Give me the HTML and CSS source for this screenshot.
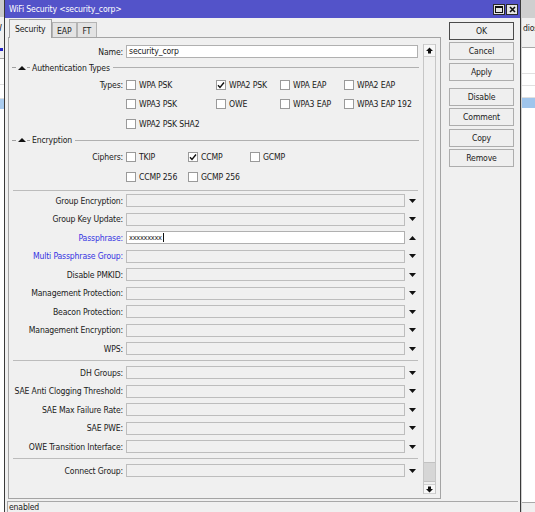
FILE: index.html
```html
<!DOCTYPE html>
<html>
<head>
<meta charset="UTF-8">
<title>WiFi Security</title>
<link rel="stylesheet" href="styles.css">
</head>
<body>
<div class="desk">
  <!-- windows behind the dialog -->
  <div class="bg-left">
    <div class="bl-title"></div>
    <div class="bl-tool"><span class="bl-w">W</span></div>
    <div class="bl-tool2"><span class="bl-plus"></span></div>
    <div class="bl-row r1"></div>
    <div class="bl-row r2"></div>
    <div class="bl-row sel"></div>
    <div class="bl-rest"></div>
  </div>
  <div class="bg-right">
    <div class="br-title"></div>
    <div class="br-head">dios</div>
    <div class="br-row r1"></div>
    <div class="br-row r2"></div>
    <div class="br-row r3"></div>
    <div class="br-row sel"></div>
    <div class="br-rest"></div>
    <div class="br-foot"></div>
  </div>

  <div class="dlg">
    <div class="title">
      <span class="title-text">WiFi Security &lt;security_corp&gt;</span>
      <div class="tbtns">
        <span class="tbtn"><svg width="8" height="7" viewBox="0 0 8 7"><rect x="0.5" y="0.5" width="7" height="6" fill="none" stroke="#111"/><rect x="0" y="0" width="8" height="2" fill="#111"/></svg></span>
        <span class="tbtn"><svg width="7" height="7" viewBox="0 0 7 7"><path d="M1 1L6 6M6 1L1 6" stroke="#111" stroke-width="1.6"/></svg></span>
      </div>
    </div>

    <div class="body">
      <div class="main">
        <div class="tabs">
          <span class="tab on">Security</span>
          <span class="tab">EAP</span>
          <span class="tab">FT</span>
        </div>
        <div class="panel">
          <div class="form">
            <div class="row"><span class="lbl">Name:</span><div class="cell"><div class="field wh full">security_corp</div></div></div>

            <div class="sect"><span class="dash"></span><svg class="stri" width="8" height="4" viewBox="0 0 8 4"><path d="M0 4H8L4 0Z" fill="#111"/></svg><span class="dash2"></span><span class="sect-t">Authentication Types</span><span class="sect-line"></span></div>

            <div class="crow"><span class="lbl">Types:</span>
              <div class="checks types">
                <span class="chk"><i class="box"></i>WPA PSK</span>
                <span class="chk"><i class="box"><svg width="8" height="8" viewBox="0 0 8 8"><path d="M1 4.2L3 6.5L7 1.5" fill="none" stroke="#111" stroke-width="1.4"/></svg></i>WPA2 PSK</span>
                <span class="chk"><i class="box"></i>WPA EAP</span>
                <span class="chk"><i class="box"></i>WPA2 EAP</span>
              </div>
            </div>
            <div class="crow"><span class="lbl"></span>
              <div class="checks types">
                <span class="chk"><i class="box"></i>WPA3 PSK</span>
                <span class="chk"><i class="box"></i>OWE</span>
                <span class="chk"><i class="box"></i>WPA3 EAP</span>
                <span class="chk"><i class="box"></i>WPA3 EAP 192</span>
              </div>
            </div>
            <div class="crow"><span class="lbl"></span>
              <div class="checks types">
                <span class="chk"><i class="box"></i>WPA2 PSK SHA2</span>
              </div>
            </div>

            <div class="sect"><span class="dash"></span><svg class="stri" width="8" height="4" viewBox="0 0 8 4"><path d="M0 4H8L4 0Z" fill="#111"/></svg><span class="dash2"></span><span class="sect-t">Encryption</span><span class="sect-line"></span></div>

            <div class="crow"><span class="lbl">Ciphers:</span>
              <div class="checks ciphers">
                <span class="chk"><i class="box"></i>TKIP</span>
                <span class="chk"><i class="box"><svg width="8" height="8" viewBox="0 0 8 8"><path d="M1 4.2L3 6.5L7 1.5" fill="none" stroke="#111" stroke-width="1.4"/></svg></i>CCMP</span>
                <span class="chk"><i class="box"></i>GCMP</span>
              </div>
            </div>
            <div class="crow"><span class="lbl"></span>
              <div class="checks ciphers">
                <span class="chk"><i class="box"></i>CCMP 256</span>
                <span class="chk"><i class="box"></i>GCMP 256</span>
              </div>
            </div>

            <div class="sep first"></div>

            <div class="row"><span class="lbl">Group Encryption:</span><div class="cell"><div class="field"></div><span class="arr"><svg width="7" height="4" viewBox="0 0 7 4"><path d="M0 0H7L3.5 4Z" fill="#111"/></svg></span></div></div>
            <div class="row"><span class="lbl">Group Key Update:</span><div class="cell"><div class="field"></div><span class="arr"><svg width="7" height="4" viewBox="0 0 7 4"><path d="M0 0H7L3.5 4Z" fill="#111"/></svg></span></div></div>
            <div class="row"><span class="lbl blue">Passphrase:</span><div class="cell"><div class="field wh"><span class="pw">xxxxxxxxx</span><span class="caret"></span></div><span class="arr"><svg width="7" height="4" viewBox="0 0 7 4"><path d="M0 4H7L3.5 0Z" fill="#111"/></svg></span></div></div>
            <div class="row"><span class="lbl blue">Multi Passphrase Group:</span><div class="cell"><div class="field"></div><span class="arr"><svg width="7" height="4" viewBox="0 0 7 4"><path d="M0 0H7L3.5 4Z" fill="#111"/></svg></span></div></div>
            <div class="row"><span class="lbl">Disable PMKID:</span><div class="cell"><div class="field"></div><span class="arr"><svg width="7" height="4" viewBox="0 0 7 4"><path d="M0 0H7L3.5 4Z" fill="#111"/></svg></span></div></div>
            <div class="row"><span class="lbl">Management Protection:</span><div class="cell"><div class="field"></div><span class="arr"><svg width="7" height="4" viewBox="0 0 7 4"><path d="M0 0H7L3.5 4Z" fill="#111"/></svg></span></div></div>
            <div class="row"><span class="lbl">Beacon Protection:</span><div class="cell"><div class="field"></div><span class="arr"><svg width="7" height="4" viewBox="0 0 7 4"><path d="M0 0H7L3.5 4Z" fill="#111"/></svg></span></div></div>
            <div class="row"><span class="lbl">Management Encryption:</span><div class="cell"><div class="field"></div><span class="arr"><svg width="7" height="4" viewBox="0 0 7 4"><path d="M0 0H7L3.5 4Z" fill="#111"/></svg></span></div></div>
            <div class="row"><span class="lbl">WPS:</span><div class="cell"><div class="field"></div><span class="arr"><svg width="7" height="4" viewBox="0 0 7 4"><path d="M0 0H7L3.5 4Z" fill="#111"/></svg></span></div></div>

            <div class="sep"></div>

            <div class="row"><span class="lbl">DH Groups:</span><div class="cell"><div class="field"></div><span class="arr"><svg width="7" height="4" viewBox="0 0 7 4"><path d="M0 0H7L3.5 4Z" fill="#111"/></svg></span></div></div>
            <div class="row"><span class="lbl">SAE Anti Clogging Threshold:</span><div class="cell"><div class="field"></div><span class="arr"><svg width="7" height="4" viewBox="0 0 7 4"><path d="M0 0H7L3.5 4Z" fill="#111"/></svg></span></div></div>
            <div class="row"><span class="lbl">SAE Max Failure Rate:</span><div class="cell"><div class="field"></div><span class="arr"><svg width="7" height="4" viewBox="0 0 7 4"><path d="M0 0H7L3.5 4Z" fill="#111"/></svg></span></div></div>
            <div class="row"><span class="lbl">SAE PWE:</span><div class="cell"><div class="field"></div><span class="arr"><svg width="7" height="4" viewBox="0 0 7 4"><path d="M0 0H7L3.5 4Z" fill="#111"/></svg></span></div></div>
            <div class="row"><span class="lbl">OWE Transition Interface:</span><div class="cell"><div class="field"></div><span class="arr"><svg width="7" height="4" viewBox="0 0 7 4"><path d="M0 0H7L3.5 4Z" fill="#111"/></svg></span></div></div>

            <div class="sep"></div>

            <div class="row"><span class="lbl">Connect Group:</span><div class="cell"><div class="field"></div><span class="arr"><svg width="7" height="4" viewBox="0 0 7 4"><path d="M0 0H7L3.5 4Z" fill="#111"/></svg></span></div></div>
          </div>

          <div class="scroll">
            <span class="sbtn up"><svg width="7" height="7" viewBox="0 0 7 7"><path d="M0 4L3.5 0.5L7 4H5V6.5H2V4Z" fill="#111"/></svg></span>
            <span class="strack"></span>
            <span class="thumb"></span>
            <span class="sbtn down"><svg width="7" height="7" viewBox="0 0 7 7"><path d="M0 3L3.5 6.5L7 3H5V0.5H2V3Z" fill="#111"/></svg></span>
          </div>
        </div>
      </div>

      <div class="btns">
        <span class="btn def">OK</span>
        <span class="btn">Cancel</span>
        <span class="btn">Apply</span>
        <span class="btn gap">Disable</span>
        <span class="btn">Comment</span>
        <span class="btn">Copy</span>
        <span class="btn">Remove</span>
      </div>
    </div>

    <div class="status"><div class="status-cell">enabled</div></div>
  </div>
</div>
</body>
</html>
```

FILE: styles.css
```css
*{margin:0;padding:0;box-sizing:border-box;}
body{font-family:"DejaVu Sans Condensed","Liberation Sans",sans-serif;font-size:8.6px;letter-spacing:-0.15px;color:#1a1a1a;background:#fff;}
svg{display:block;}
.desk{width:535px;height:512px;position:relative;overflow:hidden;background:#fff;}

/* background windows */
.bg-left{position:absolute;left:0;top:0;width:4px;height:512px;display:flex;flex-direction:column;overflow:hidden;}
.bl-title{height:17px;background:#cbcbcb;}
.bl-tool{height:23px;background:#f0f0f0;overflow:hidden;line-height:22px;}
.bl-w{display:block;margin-left:-6px;font-size:9px;color:#222;}
.bl-tool2{height:19px;background:#f0f0f0;border-bottom:1px solid #a8a8a8;display:flex;align-items:center;}
.bl-plus{width:3px;height:3px;background:#2222c8;}
.bl-row{background:#fff;border-bottom:1px solid #dedede;}
.bl-row.r1{height:26px;}
.bl-row.r2{height:14px;}
.bl-row.sel{height:10px;background:#a9cbee;border:none;}
.bl-rest{flex:1;background:#fff;}

.bg-right{position:absolute;left:521px;top:0;width:14px;height:512px;display:flex;flex-direction:column;overflow:hidden;border-left:1px solid #d0d0d0;}
.br-title{height:18px;background:#cfcfcf;}
.br-head{height:30px;background:#f0f0f0;border-bottom:1px solid #a8a8a8;padding-top:5px;line-height:10px;white-space:nowrap;padding-left:1px;}
.br-row{background:#fff;border-bottom:1px solid #e0e0e0;}
.br-row.r1{height:26px;}
.br-row.r2{height:12px;}
.br-row.r3{height:12px;}
.br-row.sel{height:10px;background:#9fc5ec;border:none;}
.br-rest{flex:1;background:#fff;}
.br-foot{height:10px;background:#f0f0f0;border-top:1px solid #a8a8a8;}

/* dialog */
.dlg{position:absolute;left:4px;top:0;width:517px;height:530px;background:#f0f0f0;border-left:1px solid #3a3a3a;border-right:1px solid #3a3a3a;display:flex;flex-direction:column;}
.title{height:18px;flex:none;background:#5353c9;color:#fff;display:flex;align-items:center;padding:0 2px 0 4px;}
.title-text{flex:1;white-space:nowrap;}
.tbtns{display:flex;gap:1px;}
.tbtn{width:12px;height:11px;border:1px solid #2a2a2a;background:#e4e4e4;display:flex;align-items:center;justify-content:center;}

.body{display:flex;height:482px;flex:none;}
.main{width:433px;margin-left:3px;display:flex;flex-direction:column;}
.tabs{display:flex;align-items:flex-end;height:19px;margin-top:1px;padding-left:1px;}
.tab{height:16px;padding:1px 4.5px 0;border:1px solid #b4b4b4;border-bottom:none;background:#e3e3e3;display:flex;align-items:center;white-space:nowrap;}
.tab.on{height:19px;padding:0 5px 1px;background:#f0f0f0;border-color:#a0a0a0;position:relative;z-index:1;}
.panel{height:462px;margin-top:-1px;border:1px solid #a4a4a4;display:flex;}

.form{width:410px;padding-top:4.25px;}
.row{display:grid;grid-template-columns:114px 1fr;column-gap:3px;height:18.5px;align-items:center;}
.crow{display:grid;grid-template-columns:114px 1fr;column-gap:3px;height:19.5px;align-items:center;}
.lbl{text-align:right;white-space:nowrap;}
.lbl.blue{color:#3434e2;}
.cell{display:flex;align-items:center;}
.field{width:279px;height:13px;border:1px solid #bdbdbd;background:#f0f0f0;padding-left:2px;line-height:11px;white-space:nowrap;display:flex;align-items:center;}
.field.wh{background:#fff;border-color:#b0b0b0;}
.field.full{width:292px;}
.pw{font-size:7.4px;letter-spacing:-0.3px;}
.caret{width:1px;height:9px;background:#111;margin-left:1px;}
.arr{width:15px;display:flex;justify-content:center;}

.sect{display:flex;align-items:center;height:14px;}
.dash{width:4px;height:1px;background:#a0a0a0;margin-left:3px;}
.stri{margin-left:2px;}
.dash2{width:3px;height:1px;background:#a0a0a0;margin-left:1px;}
.sect-t{margin-left:2px;white-space:nowrap;}
.sect-line{flex:1;height:1px;background:#b0b0b0;margin-left:3px;}

.checks{display:grid;align-items:center;}
.types{grid-template-columns:90px 64px 64px 1fr;}
.ciphers{grid-template-columns:62px 62px 1fr;}
.chk{display:flex;align-items:center;white-space:nowrap;}
.box{width:10px;height:10px;border:1px solid #9a9a9a;background:#fff;margin-right:3px;display:flex;align-items:center;justify-content:center;flex:none;}

.sep{height:0;border-top:1px solid #bcbcbc;margin:2.25px 0 2.25px 4px;width:405px;}
.sep.first{margin-top:3.5px;margin-bottom:0.5px;}

.scroll{width:13px;margin:6px 0 4px 4px;border-left:1px solid #c6c6c6;border-right:1px solid #c6c6c6;display:flex;flex-direction:column;}
.sbtn{display:flex;align-items:center;justify-content:center;background:#f7f7f7;border-top:1px solid #d0d0d0;border-bottom:1px solid #d0d0d0;}
.sbtn.up{height:13px;}
.sbtn.down{height:10px;}
.strack{flex:1;}
.thumb{height:20px;background:#d6d6d6;border-top:1px solid #c2c2c2;border-bottom:1px solid #c2c2c2;margin-bottom:2px;}

.btns{width:65px;margin-left:8px;padding-top:4px;display:flex;flex-direction:column;}
.btn{height:18px;flex:none;margin-bottom:2.4px;border:1px solid #adadad;background:#efefef;display:flex;align-items:center;justify-content:center;white-space:nowrap;}
.btn.def{border-color:#4a4a4a;}
.btn.gap{margin-top:4.6px;}

.status{padding:1px 2px 0 2px;}
.status-cell{border-top:1px solid #a8a8a8;border-left:1px solid #a8a8a8;height:20px;padding:0 0 0 1px;line-height:10px;}
```
